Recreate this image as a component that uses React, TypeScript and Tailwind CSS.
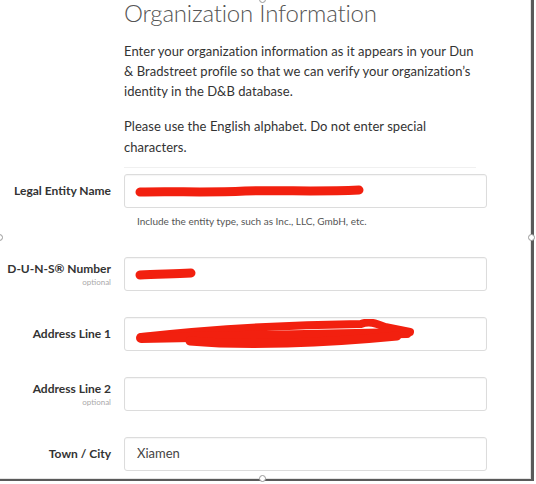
import React from "react";

const font = { fontFamily: "Lato, 'Open Sans', sans-serif" };

interface RowProps {
  label: string;
  optional?: boolean;
  children?: React.ReactNode;
  className?: string;
}

const Row: React.FC<RowProps> = ({ label, optional, children, className }) => (
  <div className={`flex items-center ${className ?? ""}`}>
    <div className="w-[113px] pr-[2px] text-right leading-none">
      <div className="text-[12px] font-bold text-[#333]">{label}</div>
      {optional && <div className="mt-[3px] text-[8px] text-[#aaa]">optional</div>}
    </div>
    <div className="ml-[11px] flex h-[34px] w-[363px] items-center rounded-[3px] border border-[#dcdcdc] bg-white px-[12px] text-[13px] text-[#444] shadow-[inset_0_1px_1px_rgba(0,0,0,0.04)]">
      {children}
    </div>
  </div>
);

const Scribble: React.FC<{ w: number; h: number; d: string; sw: number }> = ({ w, h, d, sw }) => (
  <svg width={w} height={h} viewBox={`0 0 ${w} ${h}`} className="-ml-[2px] block">
    <path d={d} fill="none" stroke="#f2200f" strokeWidth={sw} strokeLinecap="round" strokeLinejoin="round" />
  </svg>
);

export default function App() {
  return (
    <div className="relative h-[484px] w-[536px] overflow-hidden bg-white" style={font}>
      <div className="h-[481px] w-[534px] border-r-[3px] border-b-[2px] border-r-[#5a5a5a] border-b-[#5a5a5a]">
        <div className="h-full w-[531px] border-r border-b border-[#e4e4e4]">
          <div className="pl-[124px]">
            <h1 className="text-[24px] font-light leading-[26px] tracking-[-0.2px] text-[#555]">Organization Information</h1>
            <p className="mt-[15px] w-[370px] text-[13px] leading-[20px] tracking-[0.05px] text-[#333]">
              Enter your organization information as it appears in your Dun
              <br />& Bradstreet profile so that we can verify your organization’s
              <br />identity in the D&amp;B database.
            </p>
            <p className="mt-[15px] w-[370px] text-[13px] leading-[21px] tracking-[0.05px] text-[#333]">
              Please use the English alphabet. Do not enter special
              <br />characters.
            </p>
            <div className="mt-[9px] h-px w-[352px] bg-[#f0f0f0]" />
          </div>

          <Row label="Legal Entity Name" className="mt-[6px]">
            <Scribble w={230} h={14} sw={9} d="M5 8 C40 7 70 9 110 7 C150 6 180 8 224 6" />
          </Row>
          <p className="mt-[7px] pl-[137px] text-[10px] leading-[12px] text-[#555]">
            Include the entity type, such as Inc., LLC, GmbH, etc.
          </p>

          <Row label="D-U-N-S® Number" optional className="mt-[30px]">
            <Scribble w={62} h={14} sw={9} d="M5 8 C20 7 35 7 56 6" />
          </Row>

          <Row label="Address Line 1" className="mt-[26px]">
            <svg width={285} height={30} viewBox="0 0 285 30" className="-ml-[2px] block">
              <g fill="none" stroke="#f2200f" strokeLinecap="round" strokeLinejoin="round">
                <path d="M6 18 C60 12 140 6 226 5 C234 2 240 4 250 8 L275 13" strokeWidth={8} />
                <path d="M6 19 C80 18 170 16 272 14" strokeWidth={10} />
                <path d="M55 22 C110 27 190 24 262 17" strokeWidth={9} />
              </g>
            </svg>
          </Row>

          <Row label="Address Line 2" optional className="mt-[26px]" />

          <Row label="Town / City" className="mt-[26px]">
            Xiamen
          </Row>
        </div>
      </div>

      <span className="absolute left-[259px] top-[-4px] h-[7px] w-[7px] rounded-full border border-[#999] bg-white" />
      <span className="absolute left-[-4px] top-[234px] h-[7px] w-[7px] rounded-full border border-[#999] bg-white" />
      <span className="absolute left-[528px] top-[234px] h-[7px] w-[7px] rounded-full border border-[#999] bg-white" />
      <span className="absolute left-[259px] top-[475px] h-[7px] w-[7px] rounded-full border border-[#999] bg-white" />
    </div>
  );
}
